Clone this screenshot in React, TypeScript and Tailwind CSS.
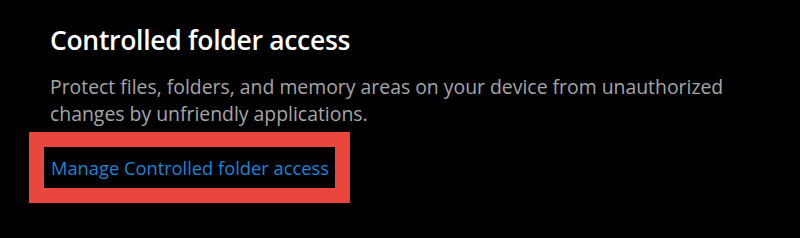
import React from "react";

export default function App() {
  return (
    <div className="w-[800px] h-[238px] bg-black overflow-hidden font-['Open_Sans',sans-serif]">
      <div className="pl-[50px] pt-[23px]">
        <h2 className="text-[26.5px] leading-[34px] font-semibold text-white tracking-[-0.3px]">
          Controlled folder access
        </h2>
        <p className="mt-[16px] w-[720px] text-[19.4px] leading-[27px] text-[#a6a6a6]">
          Protect files, folders, and memory areas on your device from unauthorized
          changes by unfriendly applications.
        </p>
        <div className="mt-[5px] -ml-[21px] w-[321px] h-[71px] border-[15px] border-[#e9463d] flex items-center pl-[7px]">
          <a className="text-[18.3px] leading-[24px] text-[#1a86d9]">Manage Controlled folder access</a>
        </div>
      </div>
    </div>
  );
}
